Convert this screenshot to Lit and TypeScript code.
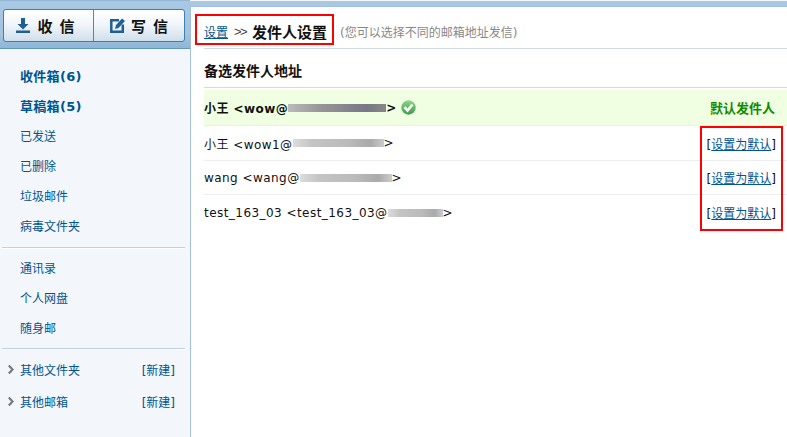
import { LitElement, html, css } from "lit";
import { customElement } from "lit/decorators.js";

@customElement("app-root")
export class AppRoot extends LitElement {
  static styles = css`
    :host { display: block; width: 787px; height: 437px; overflow: hidden; font: 12px "DejaVu Sans", "Noto Sans CJK SC", sans-serif; color: #111; }
    * { box-sizing: border-box; }
    .page { display: grid; grid-template-columns: 190px 1fr; height: 437px; background: #f3f7fb; }
    .side { display: flex; flex-direction: column; min-width: 0; }
    .head { height: 49px; padding: 8px 5px 0 3px; background: linear-gradient(#a9c8e3, #a3c3df 70%, #8fb6d6); border-top: 1px solid #94b8d8; border-bottom: 1px solid #5f97c3; }
    .btns { display: grid; grid-template-columns: 89px 1fr; height: 33px; border: 1px solid #3f7fae; border-radius: 3px; background: linear-gradient(#ffffff, #f2f6fa 45%, #cfdfec); }
    .btn { display: flex; align-items: center; justify-content: center; gap: 7px; font-size: 15px; font-weight: 700; color: #111; }
    .btn.in { padding-right: 6px; }
    .btn + .btn { border-left: 1px solid #4f86b3; gap: 6px; }
    .btn span { word-spacing: 2px; }
    nav { display: flex; flex-direction: column; padding-top: 13px; }
    .item { height: 30px; line-height: 30px; padding-left: 20px; color: #00548f; font-size: 12px; }
    .item.b { font-weight: 700; font-size: 13px; letter-spacing: .3px; }
    .sep { height: 2px; margin: 5px 5px 5px 2px; background: #bfd2e4; border-bottom: 1px solid #fff; }
    .sep.two { margin: 4px 5px 3px 2px; }
    .fold { display: flex; align-items: center; justify-content: space-between; height: 32px; padding: 0 15px 0 8px; color: #00548f; }
    .fold .l { display: flex; align-items: center; gap: 6px; }
    .main { background: #fff; border-left: 1px solid #a4bfd9; margin-top: 6px; border-top: 1px solid #a4bfd9; position: relative; padding: 0 0 0 13px; box-shadow: 0 -5px 0 #a9c8e3; }
    .crumb { height: 41px; display: flex; align-items: center; padding-top: 8px; }
    .crumb a, .set a { color: #00548f; text-decoration: underline; }
    .gg { margin: 0 4px 0 6px; color: #444; font: 13px "Liberation Sans", sans-serif; letter-spacing: -1.500px; width: 14px; }
    .title { font-size: 15px; font-weight: 700; color: #111; }
    .tip { margin-left: 13px; color: #888; }
    .mark { position: absolute; border: 2px solid #f00; pointer-events: none; }
    .m1 { left: 4px; top: 7px; width: 139px; height: 31px; }
    .m2 { left: 509px; top: 119px; width: 83px; height: 105px; }
    h2 { margin: 0; height: 40px; border-top: 1px solid #d3dce6; border-bottom: 1px solid #d3dce6; font-size: 14px; font-weight: 700; line-height: 44px; color: #111; }
    .row { display: flex; align-items: center; justify-content: space-between; height: 35px; padding-right: 11px; border-bottom: 1px solid #eceef0; }
    .row.cur { height: 36px; margin-top: 2px; padding-right: 12px; background: #f0ffe2; font-weight: 700; }
    .row.short { height: 34px; }
    .row.last { border-bottom: 0; }
    .addr { display: flex; align-items: center; letter-spacing: .45px; }
    .blur { display: inline-block; height: 8px; background: linear-gradient(90deg, #ddd, #c4c4c4 20%, #bbb 60%, #aaa 85%, #ccc); filter: blur(.7px); }
    .cur .blur { background: linear-gradient(90deg, #bbb, #999 30%, #778 80%, #888); }
    .ok { margin-left: 4px; display: block; }
    .def { color: #118a00; font-weight: 700; font-size: 13px; }
    .set { color: #111; }
  `;

  private blur(w: number) {
    return html`<i class="blur" style="width:${w}px"></i>`;
  }

  render() {
    return html`<div class="page">
      <aside class="side">
        <div class="head">
          <div class="btns">
            <div class="btn in">
              <svg width="14" height="15" viewBox="0 0 14 15"><path d="M5 0h4v6h3.500L7 11.500 1.500 6H5z M0 12.500h14V15H0z" fill="#1f5f93"/></svg>
              <span>收 信</span>
            </div>
            <div class="btn">
              <svg width="15" height="15" viewBox="0 0 15 15"><path d="M9 2.200H1.300V13.700H12.800V6.500" fill="none" stroke="#1f5f93" stroke-width="2.500"/><path d="M5 11l1-4 6-6.500 3 2.500-6.500 7z" fill="#1f5f93"/></svg>
              <span>写 信</span>
            </div>
          </div>
        </div>
        <nav>
          <div class="item b">收件箱(6)</div>
          <div class="item b">草稿箱(5)</div>
          <div class="item">已发送</div>
          <div class="item">已删除</div>
          <div class="item">垃圾邮件</div>
          <div class="item">病毒文件夹</div>
          <div class="sep"></div>
          <div class="item">通讯录</div>
          <div class="item">个人网盘</div>
          <div class="item">随身邮</div>
          <div class="sep two"></div>
          ${["其他文件夹", "其他邮箱"].map(
            (t) => html`<div class="fold">
              <span class="l"><svg width="6" height="9" viewBox="0 0 6 9"><path d="M.8 .5l3.800 4-3.800 4" fill="none" stroke="#777" stroke-width="2.200"/></svg>${t}</span>
              <span>[新建]</span>
            </div>`
          )}
        </nav>
      </aside>
      <main class="main">
        <div class="crumb">
          <a>设置</a><span class="gg">&gt;&gt;</span><span class="title">发件人设置</span>
          <span class="tip">(您可以选择不同的邮箱地址发信)</span>
        </div>
        <h2>备选发件人地址</h2>
        <div class="row cur">
          <span class="addr">小王 &lt;wow@${this.blur(98)}&gt;
            <svg class="ok" width="15" height="15" viewBox="0 0 15 15">
              <defs><linearGradient id="okg" x1="0" y1="0" x2="0" y2="1"><stop offset="0" stop-color="#8ed58c"/><stop offset="1" stop-color="#3f9a4c"/></linearGradient></defs>
              <circle cx="7.500" cy="7.500" r="7.200" fill="url(#okg)"/><path d="M3.500 7.200l3 3.300 5-6" fill="none" stroke="#fff" stroke-width="2.600"/>
            </svg>
          </span>
          <span class="def">默认发件人</span>
        </div>
        <div class="row"><span class="addr">小王 &lt;wow1@${this.blur(91)}&gt;</span><span class="set">[<a>设置为默认</a>]</span></div>
        <div class="row short"><span class="addr">wang &lt;wang@${this.blur(92)}&gt;</span><span class="set">[<a>设置为默认</a>]</span></div>
        <div class="row last"><span class="addr">test_163_03 &lt;test_163_03@${this.blur(55)}&gt;</span><span class="set">[<a>设置为默认</a>]</span></div>
        <div class="mark m1"></div>
        <div class="mark m2"></div>
      </main>
    </div>`;
  }
}
